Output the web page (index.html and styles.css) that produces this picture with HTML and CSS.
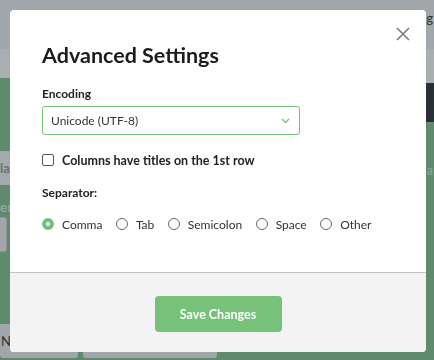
FILE: index.html
```html
<!DOCTYPE html>
<html lang="en">
<head>
  <meta charset="UTF-8">
  <meta name="viewport" content="width=device-width, initial-scale=1.0">
  <title>Advanced Settings</title>
  <link rel="stylesheet" href="styles.css">
</head>
<body>
  <div class="app">
    <div class="app-top"><span class="app-top-text">ng</span></div>
    <div class="app-bar"></div>
    <div class="app-main">
      <div class="app-left">
        <div class="app-tabs"><span>la</span></div>
        <div class="app-hint">en</div>
        <div class="app-input"></div>
        <div class="app-actions">
          <span class="app-btn"><span>Nu</span></span>
          <span class="app-btn app-btn-wide"></span>
        </div>
      </div>
      <div class="app-right">
        <div class="app-dark"></div>
        <div class="app-side-text">ba</div>
      </div>
    </div>
  </div>

  <div class="overlay">
    <div class="modal">
      <button class="modal-close" aria-label="Close">
        <svg width="14" height="14" viewBox="0 0 14 14"><path d="M1 1 L13 13 M13 1 L1 13" stroke="#7b7b7b" stroke-width="1.6" fill="none"/></svg>
      </button>
      <div class="modal-body">
        <h2>Advanced Settings</h2>

        <label class="field-label" for="encoding">Encoding</label>
        <div class="select" id="encoding">
          <span>Unicode (UTF-8)</span>
          <svg width="9" height="6" viewBox="0 0 9 6"><path d="M1 1 L4.5 4.5 L8 1" stroke="#74c27a" stroke-width="1.3" fill="none"/></svg>
        </div>

        <label class="check-row">
          <input type="checkbox">
          <span>Columns have titles on the 1st row</span>
        </label>

        <div class="field-label sep-label">Separator:</div>
        <div class="radio-row">
          <label class="radio"><input type="radio" name="sep" checked><span>Comma</span></label>
          <label class="radio"><input type="radio" name="sep"><span>Tab</span></label>
          <label class="radio"><input type="radio" name="sep"><span>Semicolon</span></label>
          <label class="radio"><input type="radio" name="sep"><span>Space</span></label>
          <label class="radio"><input type="radio" name="sep"><span>Other</span></label>
        </div>
      </div>
      <div class="modal-footer">
        <button class="btn-save">Save Changes</button>
      </div>
    </div>
  </div>
</body>
</html>
```

FILE: styles.css
```css
body {
  margin: 0;
  font-family: Lato, "Open Sans", sans-serif;
  color: #222;
  overflow: hidden;
}

/* dimmed app in the background */
.app {
  height: 360px;
  display: flex;
  flex-direction: column;
  background: #5f8a6d;
}
.app-top {
  height: 49px;
  background: #a1a7ab;
  display: flex;
  justify-content: flex-end;
  padding: 10px 1px 0 0;
  box-sizing: border-box;
}
.app-top-text {
  font-size: 13px;
  color: #2c3337;
}
.app-bar {
  height: 29px;
  background: #a9aeb1;
}
.app-main {
  flex: 1;
  display: flex;
}
.app-left {
  flex: 1;
  display: flex;
  flex-direction: column;
  padding-top: 73px;
}
.app-tabs {
  height: 34px;
  background: #a4a9ac;
  display: flex;
  align-items: center;
}
.app-tabs span {
  font-size: 13px;
  font-weight: 700;
  color: #6a7276;
}
.app-hint {
  margin-top: 14px;
  font-size: 13px;
  font-weight: 700;
  color: #98a69e;
}
.app-input {
  margin-top: 2px;
  width: 6px;
  height: 33px;
  background: #a0a6aa;
  border: 1px solid #8e9497;
  border-left: none;
  border-radius: 0 3px 3px 0;
}
.app-actions {
  margin-top: auto;
  margin-bottom: 2px;
  display: flex;
  gap: 5px;
  height: 34px;
}
.app-btn {
  width: 78px;
  background: #a1a6aa;
  border-radius: 0 0 3px 3px;
  display: flex;
  align-items: center;
  font-size: 13px;
  color: #2c3337;
}
.app-btn span {
  padding-left: 1px;
}
.app-btn-wide {
  width: 134px;
}
.app-right {
  width: 120px;
  display: flex;
  flex-direction: column;
}
.app-dark {
  height: 39px;
  background: #263035;
  border-top: 5px solid #a9aeb1;
}
.app-side-text {
  margin-top: 40px;
  text-align: right;
  padding-right: 1px;
  font-size: 13px;
  color: #93a69b;
}

/* modal */
.overlay {
  position: fixed;
  inset: 0;
  padding: 10px 8px 0 10px;
}
.modal {
  position: relative;
  background: #fff;
  border-radius: 4px;
  overflow: hidden;
}
.modal-close {
  position: absolute;
  top: 17px;
  right: 16px;
  border: none;
  background: none;
  padding: 0;
  width: 14px;
  height: 14px;
  cursor: pointer;
}
.modal-close svg {
  display: block;
}
.modal-body {
  padding: 30px 32px 40px;
}
h2 {
  margin: 0;
  font-size: 21.5px;
  line-height: 30px;
  font-weight: 700;
  color: #1c1c1c;
}
.field-label {
  display: block;
  margin-top: 16px;
  font-size: 12px;
  line-height: 16px;
  font-weight: 700;
  color: #222;
}
.select {
  margin-top: 4px;
  width: 258px;
  height: 29px;
  box-sizing: border-box;
  border: 1px solid #74c27a;
  border-radius: 3px;
  display: flex;
  align-items: center;
  justify-content: space-between;
  padding: 0 9px 0 8px;
  font-size: 12px;
  color: #333;
}
.check-row {
  margin-top: 17px;
  display: flex;
  align-items: center;
  gap: 8px;
  height: 16px;
  font-size: 12.5px;
  font-weight: 700;
  color: #222;
}
.check-row input {
  appearance: none;
  margin: 0;
  width: 12px;
  height: 12px;
  border: 1px solid #555;
  border-radius: 2px;
}
.sep-label {
  margin-top: 17px;
}
.radio-row {
  margin-top: 15px;
  display: flex;
  gap: 13.5px;
  height: 16px;
}
.radio {
  display: flex;
  align-items: center;
  gap: 8px;
  font-size: 12px;
  color: #333;
}
.radio input {
  appearance: none;
  margin: 0;
  width: 12px;
  height: 12px;
  border: 1px solid #666;
  border-radius: 50%;
  box-sizing: border-box;
}
.radio input:checked {
  border: 4px solid #74c27a;
  background: #fff;
}

.modal-footer {
  border-top: 1px solid #c3c5c4;
  background: #f2f3f2;
  height: 80px;
  display: flex;
  justify-content: center;
  align-items: flex-start;
  padding-top: 23px;
  box-sizing: border-box;
}
.btn-save {
  width: 127px;
  height: 36px;
  border: none;
  border-radius: 4px;
  background: #76c27b;
  color: #fff;
  font-family: inherit;
  font-size: 12.5px;
  font-weight: 700;
  cursor: pointer;
}
```
